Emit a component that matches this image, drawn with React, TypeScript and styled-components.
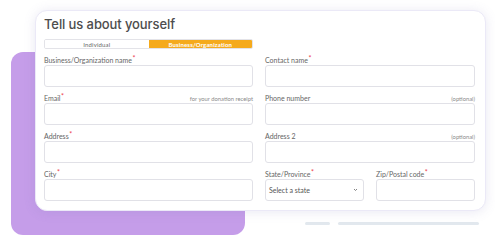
import React from "react";
import styled, { createGlobalStyle } from "styled-components";

const Global = createGlobalStyle`
  html, body { margin: 0; padding: 0; background: #ffffff; }
  body { font-family: Lato, "Noto Sans", sans-serif; }
  * { box-sizing: border-box; }
`;

const Stage = styled.div`
  position: relative;
  width: 495px;
  height: 245px;
  overflow: hidden;
  background: #ffffff;
  display: flex;
  flex-direction: column;
  padding: 10px 9px 0 35px;
`;

const PurpleBlock = styled.div`
  position: absolute;
  left: 11px;
  top: 52px;
  width: 234px;
  height: 183px;
  border-radius: 12px;
  background: #c59de9;
`;

const Card = styled.div`
  position: relative;
  width: 451px;
  height: 201px;
  background: #ffffff;
  border-radius: 12px;
  border: 1px solid #ebe9f7;
  box-shadow: 0 1px 12px rgba(120, 110, 180, 0.16);
  padding: 3px 10px 0 8px;
  display: flex;
  flex-direction: column;
`;

const Title = styled.h1`
  margin: 0;
  font-family: Inter, Lato, sans-serif;
  font-weight: 500;
  font-size: 13px;
  line-height: 21px;
  color: #4d4d4d;
  letter-spacing: -0.1px;
`;

const Grid = styled.div`
  margin-top: 4px;
  display: grid;
  grid-template-columns: 209px 210px;
  column-gap: 12px;
  row-gap: 7px;
  align-items: end;
`;

const Tabs = styled.div`
  display: grid;
  grid-template-columns: 1fr 1fr;
  height: 10px;
  border-radius: 2px;
  overflow: hidden;
  border: 1px solid #e3e3e8;
`;

const Tab = styled.div<{ $active?: boolean }>`
  display: flex;
  align-items: center;
  justify-content: center;
  font-size: 6px;
  font-weight: ${(p) => (p.$active ? 700 : 400)};
  color: ${(p) => (p.$active ? "#ffffff" : "#666666")};
  background: ${(p) => (p.$active ? "#f5aa1c" : "#ffffff")};
  letter-spacing: 0.15px;
`;

const TabSpacer = styled.div``;

const Field = styled.div`
  display: flex;
  flex-direction: column;
`;

const LabelRow = styled.div`
  height: 9px;
  display: flex;
  align-items: center;
  justify-content: space-between;
`;

const Label = styled.span`
  font-size: 7px;
  color: #666666;
  line-height: 9px;
`;

const Req = styled.sup`
  color: #ec3b4b;
  font-size: 7px;
  vertical-align: top;
  position: relative;
  top: -2px;
  margin-left: 0.5px;
`;

const Hint = styled.span`
  font-size: 5.8px;
  color: #8a8a8a;
  line-height: 9px;
`;

const Input = styled.div`
  height: 22px;
  border: 1px solid #e1e1e7;
  border-radius: 3px;
  background: #ffffff;
`;

const Split = styled.div`
  display: grid;
  grid-template-columns: 99px 99px;
  column-gap: 12px;
`;

const Select = styled.div`
  height: 22px;
  border: 1px solid #e1e1e7;
  border-radius: 3px;
  background: #ffffff;
  display: flex;
  align-items: center;
  justify-content: space-between;
  padding: 0 5px 0 3px;
  font-size: 7px;
  color: #555555;
`;

const Bars = styled.div`
  display: flex;
  justify-content: flex-end;
  gap: 8px;
  margin-top: 11px;
  padding-right: 7px;
`;

const Bar = styled.div<{ $w: number }>`
  width: ${(p) => p.$w}px;
  height: 3px;
  border-radius: 2px;
  background: #e2e8ee;
`;

function F({ label, req, hint }: { label: string; req?: boolean; hint?: string }) {
  return (
    <Field>
      <LabelRow>
        <Label>
          {label}
          {req && <Req>*</Req>}
        </Label>
        {hint && <Hint>{hint}</Hint>}
      </LabelRow>
      <Input />
    </Field>
  );
}

export default function App() {
  return (
    <>
      <Global />
      <Stage>
        <PurpleBlock />
        <Card>
          <Title>Tell us about yourself</Title>
          <Grid>
            <Tabs>
              <Tab>Individual</Tab>
              <Tab $active>Business/Organization</Tab>
            </Tabs>
            <TabSpacer />
            <F label="Business/Organization name" req />
            <F label="Contact name" req />
            <F label="Email" req hint="for your donation receipt" />
            <F label="Phone number" hint="(optional)" />
            <F label="Address" req />
            <F label="Address 2" hint="(optional)" />
            <F label="City" req />
            <Split>
              <Field>
                <LabelRow>
                  <Label>
                    State/Province<Req>*</Req>
                  </Label>
                </LabelRow>
                <Select>
                  <span>Select a state</span>
                  <svg width="5" height="4" viewBox="0 0 5 4">
                    <path d="M1 1 L2.5 2.5 L4 1" fill="none" stroke="#666" strokeWidth="0.8" />
                  </svg>
                </Select>
              </Field>
              <F label="Zip/Postal code" req />
            </Split>
          </Grid>
        </Card>
        <Bars>
          <Bar $w={25} />
          <Bar $w={141} />
        </Bars>
      </Stage>
    </>
  );
}
